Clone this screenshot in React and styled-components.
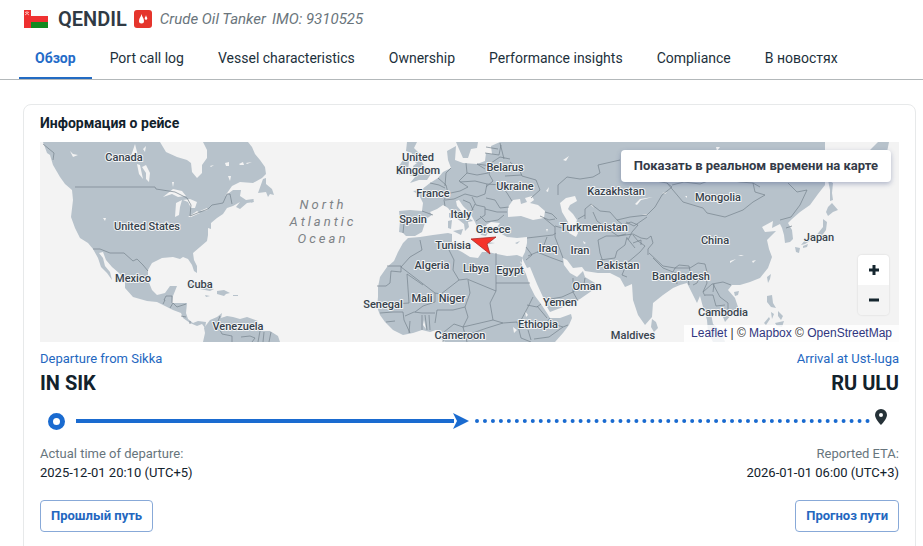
import React from "react";
import styled, { createGlobalStyle } from "styled-components";

const GlobalStyle = createGlobalStyle`
  *, *::before, *::after { box-sizing: border-box; }
  body {
    margin: 0;
    background: #fff;
    color: #12222c;
    font-family: Roboto, "Liberation Sans", sans-serif;
    font-size: 14px;
    line-height: 20px;
    overflow-x: hidden;
  }
  h1, h2, p { margin: 0; }
`;

const Header = styled.header`
  display: flex;
  align-items: center;
  height: 38px;
  padding: 0 24px;
`;

const Flag = styled.svg`
  width: 24px;
  height: 18px;
  margin-right: 10px;
`;

const VesselName = styled.h1`
  font-size: 20px;
  line-height: 24px;
  font-weight: 600;
  color: #303a44;
`;

const TypeBadge = styled.span`
  display: flex;
  align-items: center;
  justify-content: center;
  width: 18px;
  height: 18px;
  margin: 0 8px 0 7px;
  border-radius: 3px;
  background: #e5352c;
`;

const Meta = styled.span`
  margin-right: 6px;
  font-size: 15px;
  font-style: italic;
  color: #6a757c;
`;

const Tabs = styled.nav`
  display: flex;
  gap: 2px;
  height: 42px;
  padding-left: 19px;
  border-bottom: 1px solid #b3b8ba;
`;

const Tab = styled.a`
  display: flex;
  align-items: center;
  padding: 0 16px;
  border-bottom: 2px solid ${(p) => (p.$active ? "#236bc3" : "transparent")};
  color: ${(p) => (p.$active ? "#236bc8" : "#1c303b")};
  font-weight: ${(p) => (p.$active ? 700 : 400)};
  text-decoration: none;
  white-space: nowrap;
`;

const Card = styled.main`
  margin: 24px 7px 0 23px;
  padding: 8px 16px 32px;
  border: 1px solid #e7e9ea;
  border-radius: 8px;
`;

const CardTitle = styled.h2`
  font-size: 14px;
  line-height: 21px;
  font-weight: 700;
  margin-bottom: 8px;
`;

const MapFrame = styled.section`
  position: relative;
  height: 200px;
  overflow: hidden;
  background: #f3f3f3;
`;

const MapDrawing = styled.svg`
  display: block;
  width: 100%;
  height: 100%;
`;

const MapLabel = styled.text`
  font-family: Roboto, sans-serif;
  font-size: 11px;
  font-weight: 500;
  text-anchor: middle;
  fill: #38434d;
  stroke: #f2f4f5;
  stroke-width: 2px;
  stroke-linejoin: round;
  paint-order: stroke;
`;

const OceanLabel = styled.text`
  font-family: Roboto, sans-serif;
  font-size: 13px;
  font-style: italic;
  letter-spacing: 3px;
  text-anchor: middle;
  fill: #7d8286;
`;

const LiveButton = styled.button`
  position: absolute;
  top: 8px;
  right: 8px;
  height: 32px;
  padding: 0 13px;
  border: 0;
  border-radius: 4px;
  background: #fff;
  box-shadow: 0 2px 5px rgba(50, 65, 120, 0.35);
  color: #343b48;
  font: 700 13px/20px Roboto, sans-serif;
  cursor: pointer;
`;

const ZoomControl = styled.div`
  position: absolute;
  right: 10px;
  bottom: 27px;
  display: grid;
  width: 31px;
  border-radius: 4px;
  overflow: hidden;
  box-shadow: 0 0 2px rgba(0, 0, 0, 0.15);
`;

const ZoomButton = styled.button`
  display: flex;
  align-items: center;
  justify-content: center;
  height: 30px;
  padding: 0;
  border: 0;
  background: ${(p) => (p.$muted ? "#f4f4f4" : "#fff")};
  color: #15262f;
`;

const Attribution = styled.div`
  position: absolute;
  right: 0;
  bottom: 0;
  padding: 0 7px;
  background: rgba(255, 255, 255, 0.8);
  font: 12px/17px "Liberation Sans", Arial, sans-serif;
  color: #333;
  white-space: nowrap;
`;

const AttributionLink = styled.a`
  color: #303680;
  text-decoration: none;
`;

const Row = styled.div`
  display: flex;
  justify-content: space-between;
`;

const Endpoint = styled.div`
  display: flex;
  flex-direction: column;
  align-items: ${(p) => (p.$end ? "flex-end" : "flex-start")};
`;

const PortLink = styled.a`
  margin-top: 7px;
  color: #2467bf;
  font-size: 13px;
  line-height: 20px;
  text-decoration: none;
`;

const PortCode = styled.strong`
  font-size: 20px;
  line-height: 28px;
  font-weight: 700;
`;

const Track = styled.div`
  display: flex;
  align-items: center;
  height: 44px;
  margin: 2px 12px 2px 8px;
`;

const StartMark = styled.span`
  width: 17px;
  height: 17px;
  margin-right: 11px;
  border: 5px solid #1a6bd0;
  border-radius: 50%;
`;

const Travelled = styled.span`
  flex: 0 0 45%;
  height: 4px;
  background: #1a6bd0;
`;

const Arrow = styled.svg`
  flex: none;
  width: 16px;
  height: 16px;
  margin: 0 6px 0 -1px;
`;

const Remaining = styled.span`
  flex: 1;
  border-top: 4px dotted #1a6bd0;
`;

const Pin = styled.svg`
  flex: none;
  width: 12px;
  height: 16px;
  margin: 0 0 8px 5px;
`;

const Caption = styled.p`
  color: #67757d;
  font-size: 13px;
  line-height: 18px;
`;

const Stamp = styled.p`
  font-size: 13px;
  line-height: 20px;
`;

const OutlineButton = styled.button`
  height: 32px;
  margin-top: 17px;
  padding: 0 10px;
  border: 1px solid #88a9d8;
  border-radius: 4px;
  background: #fff;
  color: #2467bf;
  font: 700 13px/20px Roboto, sans-serif;
  cursor: pointer;
`;

const tabs = [
  "Обзор",
  "Port call log",
  "Vessel characteristics",
  "Ownership",
  "Performance insights",
  "Compliance",
  "В новостях",
];

const land = [
  // North and Central America
  "M43 142L47 153 50 155 53 165 60 177 65 184 72 190 73 200 71 217 75 228 80 238 88 243 93 249 98 258 101 267 107 273 112 280 110 272 105 266 103 258 99 253 103 252 106 260 112 267 119 273 125 280 125 288 133 297 147 301 157 302 165 306 173 310 181 313 183 318 190 323 197 326 202 324 205 328 206 322 198 321 193 323 188 319 186 313 187 303 178 303 172 303 173 296 177 286 170 286 165 293 157 295 152 290 148 280 148 270 152 263 162 258 173 257 180 259 183 257 188 259 192 265 194 271 197 273 197 266 194 260 193 253 200 247 207 241 208 235 208 228 211 229 211 223 217 218 223 214 227 208 233 206 240 202 236 207 240 209 247 203 254 202 253 199 246 200 240 196 241 190 233 190 225 196 232 186 240 182 253 183 262 178 266 174 265 167 260 160 255 154 252 147 248 142 203 142 207 150 207 158 202 165 202 173 197 178 192 172 191 163 187 160 177 157 166 152 160 142Z",
  "M258 193L263 179 266 178 266 184 272 189 274 195 270 194 268 197 266 192Z",
  "M250 201l4-2-2 4zM189 284q8-3 17 3l8 2-4 2-10-2q-8-5-11-3zM217 291l7-1 6 3-4 1-2 2-7-2zM233 295h5v1h-5zM205 295l5 1-4 1z",
  // South America
  "M203 342L205 333 204 328 210 320 217 317 222 313 221 318 227 316 233 317 240 319 247 317 258 321 255 325 260 331 270 331 278 336 280 342Z",
  // Africa
  "M408 238L420 237 433 235 448 233 452 234 452 242 454 248 462 252 470 257 478 258 482 252 488 252 497 254 507 256 517 255 522 257 522 266 526 274 530 286 535 296 541 304 547 313 550 318 560 318 571 314 572 318 569 325 563 333 555 342 445 342 440 338 441 331 436 330 430 332 422 330 413 333 403 335 393 330 385 322 380 315 377 307 378 297 378 287 380 277 387 267 394 261 398 252 403 243Z",
  // Europe and Asia
  "M403 233L399 232 400 221 399 211 410 210 422 211 423 203 419 195 413 191 421 190 430 183 438 178 443 172 451 168 448 160 447 151 456 146 455 160 463 163 477 164 485 161 486 153 492 154 491 146 500 142 825 142 825 185 818 194 810 205 800 212 792 219 788 223 792 230 793 239 790 242 785 243 784 235 782 228 780 224 772 228 773 221 762 227 765 232 776 231 767 240 769 249 772 257 768 268 760 278 750 282 740 285 732 285 728 290 735 298 738 307 733 313 725 322 723 317 715 311 711 314 713 324 722 332 725 342 713 342 708 332 707 320 703 307 700 296 697 303 692 293 687 283 680 285 673 288 663 295 653 303 652 317 645 325 638 315 633 300 632 284 625 287 620 278 610 273 598 273 585 271 582 267 573 268 567 260 563 258 564 265 570 273 577 277 583 271 585 277 595 283 593 290 580 299 563 307 550 312 547 307 543 297 537 284 530 267 527 268 522 258 525 252 527 243 527 237 517 238 507 237 500 233 497 227 500 223 491 222 486 225 489 231 486 236 481 235 478 229 475 222 470 213 463 206 459 200 456 201 457 206 463 213 473 221 468 222 469 227 465 231 464 224 455 217 448 208 443 205 437 209 430 212 432 215 426 219 424 226 422 232 415 236 406 236Z",
  // Islands of Europe
  "M407 142L417 142 414 148 419 153 422 162 426 169 431 174 427 180 419 180 410 183 415 177 409 175 415 171 413 166 417 163 410 160 412 153 406 151ZM399 166L403 160 409 161 408 171 399 175ZM456 142L459 149 463 158 468 158 471 149 477 148 478 142ZM453 231L463 229 461 235ZM448 221L452 220 451 229 448 228ZM449 213l2 0 0 6-2-2zM487 242l8 1-6 1zM515 243l5-2-3 3z",
  // Islands of Asia
  "M652 319l4 3 2 6-4 4-3-5zM828 207l4-4 6 7-5 2-5 4-2-4zM823 219l4 3-1 8-5 7-8 2-8 5-4 1 5-6 9-2 4-5 4-5zM795 247l5 1-1 5-3-1zM803 246l5-2-1 3-4 1zM828 180l5 3-1 10 1 7-3 1 0-11zM870 150l8-8 11 0-2 10-3 5-6-4zM767 277l4-3-1 5-2 4zM734 292l5-1-1 4-3 1zM767 296l5-1 1 8 3 5-5-1-4-5zM771 312l3 2-2 5zM778 311l5 5-2 4-3-4zM764 323l5-6 1 2-4 6zM775 323l9-2-2 6-5-1z",
];

const water = [
  "M508 217L508 207 513 200 520 199 521 204 527 202 525 198 532 196 534 200 530 203 538 205 545 211 544 218 533 220 521 216Z",
  "M560 203L566 198 575 196 577 201 570 205 568 209 573 214 577 220 575 227 578 233 576 237 569 233 568 222 562 212Z",
  "M163 197L173 189 182 191 186 196 178 197 172 194ZM175 217L176 203 182 200 180 207 179 215ZM183 200L190 199 197 202 195 208 191 208 188 202ZM188 217L197 211 200 213 191 217ZM200 211l7-3 1 2-6 1z",
  "M142 167l4-2 4 8-1 9-3-3 0-6zM137 164l3 1 3 14-4-5zM131 156l4-12 2 8-3 5zM70 151l3 3 5 1-5 2zM210 166l4-1-3 2zM225 163l4-1 0 4-3 0zM239 164l4-2 1 3-4 0zM228 176l3 0-1 5zM172 182l2 0-1 5zM103 218l3 0-1 3zM143 149l3-3-1 6zM246 163l6-1-5 2z",
  "M635 204l5-5 13-2-12 3-4 5zM642 214l7 0-3 1zM590 204l2 0 2 4zM546 191l3-4-1 5zM563 160l6-4-3 5zM662 193l5-1-2 2zM685 196l2 0 0 2zM583 241l3 2-2 1zM546 229l2 0-1 3zM730 261l6-2-6 4zM752 261l4-1-3 3zM738 255l6 0-3 1zM716 147l4 0-3 4zM525 311l3 4-2 2zM424 320l2 9-3-4zM513 327l4 3-3 3zM520 261l2 2-1 1z",
];

const borders = [
  "M43 144l11 9-1 7M75 187H155l1 2 19 3 12 6 4 7-1 11 10-4 8-3 4-4 11-2 4-9h3l2 10",
  "M93 249h7l10 4 14 0 9 8 4-2 6 6 5 6M163 304l2-4h-1l2-4h6v7M170 308l3-5 4 4 9-3M181 316l5 1M190 321v3",
  "M220 316l-3 8 5 10 10 2v6M241 337l9-1 5 2-3 4M260 331l-2 11M264 332l-1 10M271 332l-2 10",
  "M420 240l2 10-12 7-9 10M387 266h14v6l-10-1-1 12-4 3h-9M401 267l34 26 6 1 18-14M452 242l-3 8 5 10-1 10 6 10M407 274l16 11M407 274l2 29-14 1M435 293v9l-12 4-8 6M496 253V291M459 280l8-1 29 12-6 12 3 17 10 3 14-1 11 5M496 283h34M468 280l2 13-5 14-12 3-16 0-2 13",
  "M465 307l3 10-5 10 30-7M533 297l-5 10-8 15M422 315v15M425 315l2 15M429 315l1 15M380 313l13-1 10 0 1 8 6 13M405 316l9-4 8 1 13 0M386 322l9-1M410 321l-1 12M443 342l1-10 10-8 9 3 4 15M467 335l20-7 16-5M517 322l4 16 10 4M541 304l-4 3-10-2M537 306l10 12M550 318l-3 4 16 5 5-2M563 327l-14 10-15 2M531 340l-3-10",
  "M403 233l1-10-3-8M422 211l11 4M438 178l8 7 2 8-4 7 1 6M430 183l9 2 6 3M451 168l-5 5-1 13M466 163l1 10-8 8 9 6-8 4-14 3M445 200l9-1 11-5 12 3 8-3 2-10-12-3-15 1M467 173l10 2 11-2 3-10 9-6 10 2M477 164l14 2M485 153l14 2 2-10M486 147l12 2M491 166l-2 8 4 7-7 6M487 184l14 1 6 8 5 8M486 198l9 2 5 8 9-1M472 197l4 8 9 2 0 8-9 6M463 200l7 3 3 7M485 209l12 3 10 0M480 216l6 6 12-2 6-5M475 204l-4 8M477 164l8 5M510 162l10 9 2 5 14 4 4 10-9 8M505 176l17-1M500 143l4 16",
  "M545 212l7 2 5 5M540 216l9 4 6-1M544 218l11 9 0 10 5 13 3 8M555 226l7 2M527 238l26-3 3-2M547 237l-5 13-14 6M526 247l6 8-6 5M537 252l15 6 11 4M545 300l17-3 11-5 5 9M585 278l-1 6-11 8M573 292l0-14",
  "M558 195l0-10 9-8 13 2 13-2 7-4-2-8 22-5M650 180l17 3 16 19 20 6 4 5 18 4 18-7 10-8 12-7-10-3-2-9M667 183l5 4-10 8-7 12-8 8-17 2-13 3-7-8-10-1-9-7-6 5 0 10M672 185l12-3 16 2 16-6 24 4 13 1 7 4M788 183l9 9 10-2-7 15-9 12-11 3M786 228l6-2",
  "M585 215l-7 4M593 212l4 9 12 9 9 6 8-2M617 220l6 5 8-3 7 3-6 7-4 8M626 222l8 4 13-9M598 240l2 13 5 15M598 240l8-4 12 0 15-2 8 4 6 1 4-3 2 7-5 6 0 6M600 260l15-2 2-7 8-6 2-8M627 277l-5-2 5-12 13-11 5-6-7-5-5-6M633 243l8-3 0 5M627 238l8 10",
  "M649 253l14 13 12 2 15 0 8-5 7 1 2 8-7 4-3 7-4 2M653 258l10 10 10 4 2-4M675 272l2 12M678 276l10 0 1 9M675 268l4-3 10 1 1 5M705 273l2 10-4 9 2 4M703 292l9-8 11-2 8 3M713 284l7 13 8 6 0 7M705 295l8 0 3 11 9-1M714 284l-1 8",
];

const labels = [
  ["Canada", 124, 161],
  ["United States", 147, 230],
  ["Mexico", 133, 282],
  ["Cuba", 200, 288],
  ["Venezuela", 238, 330],
  ["United", 418, 161],
  ["Kingdom", 418, 174],
  ["Belarus", 505, 171],
  ["Ukraine", 515, 190],
  ["France", 433, 197],
  ["Italy", 461, 218],
  ["Spain", 413, 223],
  ["Greece", 493, 233],
  ["Tunisia", 453, 249],
  ["Algeria", 432, 269],
  ["Libya", 476, 272],
  ["Egypt", 510, 274],
  ["Senegal", 383, 308],
  ["Mali", 422, 302],
  ["Niger", 452, 302],
  ["Cameroon", 460, 339],
  ["Ethiopia", 538, 328],
  ["Yemen", 560, 306],
  ["Oman", 587, 290],
  ["Iraq", 548, 252],
  ["Iran", 580, 254],
  ["Kazakhstan", 616, 195],
  ["Turkmenistan", 594, 231],
  ["Pakistan", 618, 269],
  ["Bangladesh", 681, 280],
  ["Maldives", 633, 339],
  ["Mongolia", 718, 201],
  ["China", 715, 244],
  ["Japan", 819, 241],
  ["Cambodia", 723, 316],
];

function WorldMap() {
  return (
    <MapDrawing viewBox="40 142 859 200" preserveAspectRatio="xMidYMid slice" role="img" aria-label="Vessel position map">
      <g fill="#b7c2cb">
        {land.map((d) => <path key={d} d={d} />)}
      </g>
      <g fill="#f3f3f3">
        {water.map((d) => <path key={d} d={d} />)}
      </g>
      <g fill="none" stroke="#76828d" strokeWidth="0.7" strokeLinejoin="round">
        {borders.map((d) => <path key={d} d={d} />)}
      </g>
      {labels.map(([name, x, y]) => <MapLabel key={name} x={x} y={y}>{name}</MapLabel>)}
      <OceanLabel x="323" y="209">North</OceanLabel>
      <OceanLabel x="323" y="226">Atlantic</OceanLabel>
      <OceanLabel x="323" y="243">Ocean</OceanLabel>
      <path d="M471 239L496 237 487 244 490 254Z" fill="#f5342b" stroke="#a52a28" strokeWidth="0.8" />
    </MapDrawing>
  );
}

export default function App() {
  return (
    <>
      <GlobalStyle />
      <Header>
        <Flag viewBox="0 0 24 18" role="img" aria-label="Oman">
          <path fill="#fafafa" d="M0 0h24v18H0z" />
          <path fill="#ee2f2f" d="M0 0h7v18H0zM7 6h17v6H7z" />
          <path fill="#128a20" d="M7 12h17v6H7z" />
          <path d="M1 2l4 3M5 2L1 5M2 2h2" stroke="#f9b9b3" strokeWidth="1" fill="none" />
        </Flag>
        <VesselName>QENDIL</VesselName>
        <TypeBadge>
          <svg width="12" height="12" viewBox="0 0 12 12" fill="#fff" aria-hidden="true">
            <path d="M4.500 1C4 4 2 5 2 8a2.500 2.500 0 0 0 5 0C7 5 5 4 4.500 1ZM9 2C8.700 4 7.700 4.400 7.700 5.500a1.300 1.300 0 0 0 2.600 0C10.300 4.400 9.300 4 9 2Z" />
          </svg>
        </TypeBadge>
        <Meta>Crude Oil Tanker</Meta>
        <Meta>IMO: 9310525</Meta>
      </Header>
      <Tabs>
        {tabs.map((name, i) => (
          <Tab key={name} href="#" $active={i === 0}>{name}</Tab>
        ))}
      </Tabs>
      <Card>
        <CardTitle>Информация о рейсе</CardTitle>
        <MapFrame>
          <WorldMap />
          <LiveButton>Показать в реальном времени на карте</LiveButton>
          <ZoomControl>
            <ZoomButton aria-label="Zoom in">
              <svg width="10" height="10" viewBox="0 0 10 10"><path d="M0 5h10M5 0v10" stroke="currentColor" strokeWidth="3" /></svg>
            </ZoomButton>
            <ZoomButton $muted aria-label="Zoom out">
              <svg width="10" height="10" viewBox="0 0 10 10"><path d="M0 5h10" stroke="currentColor" strokeWidth="3" /></svg>
            </ZoomButton>
          </ZoomControl>
          <Attribution>
            <AttributionLink href="#">Leaflet</AttributionLink> | © <AttributionLink href="#">Mapbox</AttributionLink> © <AttributionLink href="#">OpenStreetMap</AttributionLink>
          </Attribution>
        </MapFrame>
        <Row>
          <Endpoint>
            <PortLink href="#">Departure from Sikka</PortLink>
            <PortCode>IN SIK</PortCode>
          </Endpoint>
          <Endpoint $end>
            <PortLink href="#">Arrival at Ust-luga</PortLink>
            <PortCode>RU ULU</PortCode>
          </Endpoint>
        </Row>
        <Track>
          <StartMark />
          <Travelled />
          <Arrow viewBox="0 0 16 16" aria-hidden="true"><path fill="#1a6bd0" d="M0 0L16 8 0 16 4 8Z" /></Arrow>
          <Remaining />
          <Pin viewBox="0 0 12 16" aria-hidden="true">
            <path fill="#263238" fillRule="evenodd" d="M6 0a6 6 0 0 0-6 6c0 4 6 10 6 10s6-6 6-10a6 6 0 0 0-6-6Zm0 4a2 2 0 1 1 0 4 2 2 0 0 1 0-4Z" />
          </Pin>
        </Track>
        <Row>
          <Endpoint>
            <Caption>Actual time of departure:</Caption>
            <Stamp>2025-12-01 20:10 (UTC+5)</Stamp>
            <OutlineButton>Прошлый путь</OutlineButton>
          </Endpoint>
          <Endpoint $end>
            <Caption>Reported ETA:</Caption>
            <Stamp>2026-01-01 06:00 (UTC+3)</Stamp>
            <OutlineButton>Прогноз пути</OutlineButton>
          </Endpoint>
        </Row>
      </Card>
    </>
  );
}
